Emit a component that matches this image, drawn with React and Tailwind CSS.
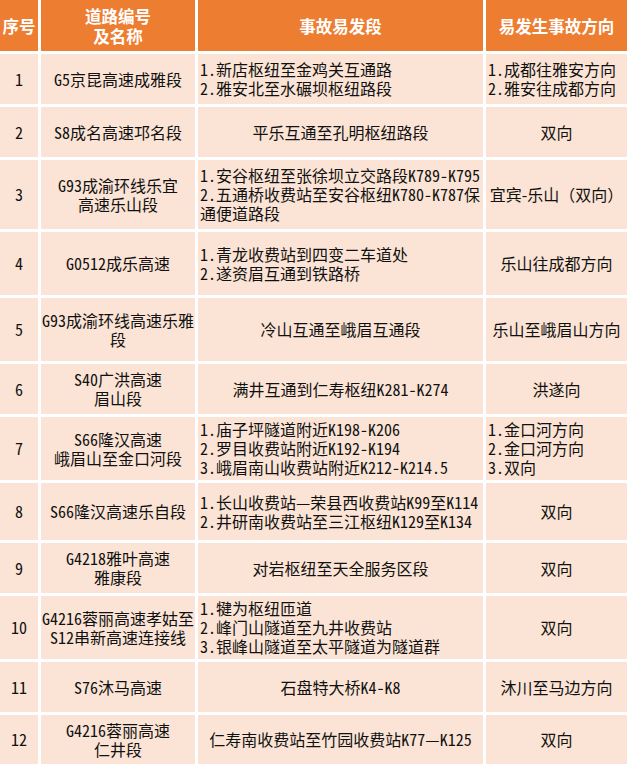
const rows = [
  {
    no: '1',
    road: ['G5京昆高速成雅段'],
    sections: ['1.新店枢纽至金鸡关互通路', '2.雅安北至水碾坝枢纽路段'],
    dir: ['1.成都往雅安方向', '2.雅安往成都方向'],
  },
  { no: '2', road: ['S8成名高速邛名段'], sections: ['平乐互通至孔明枢纽路段'], dir: ['双向'] },
  {
    no: '3',
    road: ['G93成渝环线乐宜', '高速乐山段'],
    sections: ['1.安谷枢纽至张徐坝立交路段K789-K795', '2.五通桥收费站至安谷枢纽K780-K787保', '通便道路段'],
    dir: ['宜宾-乐山（双向）'],
    fullwidth: true,
  },
  {
    no: '4',
    road: ['G0512成乐高速'],
    sections: ['1.青龙收费站到四变二车道处', '2.遂资眉互通到铁路桥'],
    dir: ['乐山往成都方向'],
  },
  {
    no: '5',
    road: ['G93成渝环线高速乐雅', '段'],
    sections: ['冷山互通至峨眉互通段'],
    dir: ['乐山至峨眉山方向'],
  },
  { no: '6', road: ['S40广洪高速', '眉山段'], sections: ['满井互通到仁寿枢纽K281-K274'], dir: ['洪遂向'] },
  {
    no: '7',
    road: ['S66隆汉高速', '峨眉山至金口河段'],
    sections: ['1.庙子坪隧道附近K198-K206', '2.罗目收费站附近K192-K194', '3.峨眉南山收费站附近K212-K214.5'],
    dir: ['1.金口河方向', '2.金口河方向', '3.双向'],
  },
  {
    no: '8',
    road: ['S66隆汉高速乐自段'],
    sections: ['1.长山收费站—荣县西收费站K99至K114', '2.井研南收费站至三江枢纽K129至K134'],
    dir: ['双向'],
  },
  { no: '9', road: ['G4218雅叶高速', '雅康段'], sections: ['对岩枢纽至天全服务区段'], dir: ['双向'] },
  {
    no: '10',
    road: ['G4216蓉丽高速孝姑至', 'S12串新高速连接线'],
    sections: ['1.犍为枢纽匝道', '2.峰门山隧道至九井收费站', '3.银峰山隧道至太平隧道为隧道群'],
    dir: ['双向'],
  },
  { no: '11', road: ['S76沐马高速'], sections: ['石盘特大桥K4-K8'], dir: ['沐川至马边方向'] },
  { no: '12', road: ['G4216蓉丽高速', '仁井段'], sections: ['仁寿南收费站至竹园收费站K77—K125'], dir: ['双向'] },
];

// 多行列表左对齐，单行居中
const Cell = ({ lines, list = false, fullwidth = false }) => (
  <div
    className={`flex items-center bg-[#fbe4d5] px-[2px] leading-[19px] ${
      list ? 'justify-start text-left' : 'justify-center text-center'
    } ${fullwidth ? '[font-feature-settings:normal]' : ''}`}
  >
    <p className="whitespace-nowrap">
      {lines.map((l, i) => (
        <span key={i}>
          {i > 0 && <br />}
          {l}
        </span>
      ))}
    </p>
  </div>
);

const HeadCell = ({ children }) => (
  <div className="flex items-center justify-center bg-[#ed7d31] text-center font-bold text-[16.5px] leading-[20px] text-white">
    <p>{children}</p>
  </div>
);

export default function App() {
  return (
    <div className="h-[772px] w-[629px] bg-white">
      <div
        className="grid w-[627px] grid-cols-[38px_154px_285px_141px] grid-rows-[51px_50px_50px_69px_63px_63px_50px_63px_57px_50px_63px_50px_49px] gap-[3px] text-[16px] text-[#111] [font-family:'Noto_Sans_CJK_SC',sans-serif] [font-feature-settings:'hwid']"
      >
        <HeadCell>序号</HeadCell>
        <HeadCell>
          道路编号
          <br />
          及名称
        </HeadCell>
        <HeadCell>事故易发段</HeadCell>
        <HeadCell>易发生事故方向</HeadCell>
        {rows.map((r) => (
          <div key={r.no} className="contents">
            <Cell lines={[r.no]} />
            <Cell lines={r.road} />
            <Cell lines={r.sections} list={r.sections.length > 1} />
            <Cell lines={r.dir} list={r.dir.length > 1} fullwidth={r.fullwidth} />
          </div>
        ))}
      </div>
    </div>
  );
}
